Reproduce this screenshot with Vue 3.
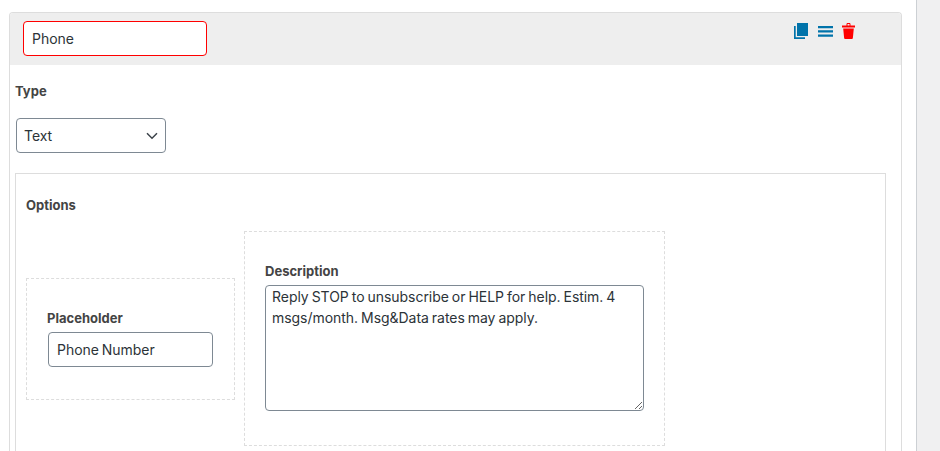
<script setup>
import { ref } from 'vue';

const fieldName = ref('Phone');
const fieldType = ref('Text');
const placeholder = ref('Phone Number');
const description = ref('Reply STOP to unsubscribe or HELP for help. Estim. 4 msgs/month. Msg&Data rates may apply.');
</script>

<template>
  <div class="page">
    <main class="content">
      <section class="field-card">
        <header class="field-head">
          <input v-model="fieldName" class="control name-input" type="text" />
          <div class="actions">
            <svg width="14" height="16" viewBox="0 0 14 16" class="icon">
              <path fill="#0073aa" d="M3 0h11v13H3z" />
              <path fill="#0073aa" d="M0 3h1.700v11.300H11V16H0z" />
            </svg>
            <svg width="15" height="11" viewBox="0 0 15 11" class="icon">
              <path fill="#0073aa" d="M0 0h15v2.300H0zM0 4.200h15v2.300H0zM0 8.500h15v2.300H0z" />
            </svg>
            <svg width="13" height="16" viewBox="0 0 13 16" class="icon trash">
              <path fill="#f00" d="M0 2.500h13v2H0zM4.500 2.500V1.200C4.500.5 5 0 5.700 0h1.600c.7 0 1.200.5 1.200 1.200v1.300h-1V1.100h-2v1.400zM1.200 5.500h10.600l-.9 9.200c-.1.700-.5 1.300-1.200 1.300H3.300c-.7 0-1.100-.6-1.200-1.300z" />
            </svg>
          </div>
        </header>
        <div class="field-body">
          <label class="label type-label">Type</label>
          <div class="select-wrap">
            <select v-model="fieldType" class="control type-select">
              <option>Text</option>
            </select>
            <svg class="chevron" width="12" height="8" viewBox="0 0 12 8">
              <path d="M1 1.200l5 5 5-5" fill="none" stroke="#3c434a" stroke-width="1.500" />
            </svg>
          </div>
          <div class="options">
            <div class="label options-label">Options</div>
            <div class="option-row">
              <div class="option-box placeholder-box">
                <label class="label">Placeholder</label>
                <input v-model="placeholder" class="control placeholder-input" type="text" />
              </div>
              <div class="option-box description-box">
                <label class="label">Description</label>
                <textarea v-model="description" class="control description-input"></textarea>
              </div>
            </div>
          </div>
        </div>
      </section>
    </main>
    <aside class="sidebar"></aside>
  </div>
</template>

<style>
html, body {
  margin: 0;
  height: 451px;
  overflow: hidden;
  background: #fff;
}
</style>

<style scoped>
.page {
  display: flex;
  height: 451px;
  overflow: hidden;
  font-family: Inter, "Noto Sans", sans-serif;
  font-size: 14px;
  color: #3c434a;
}
.content {
  width: 916px;
  flex: none;
  padding: 12px 14px 0 9px;
  box-sizing: border-box;
}
.sidebar {
  flex: 1;
  background: #f0f0f1;
  border-left: 1px solid #ccd0d4;
}
.field-card {
  border: 1px solid #ddd;
  border-bottom: 0;
  border-radius: 4px 4px 0 0;
  height: 500px;
  box-sizing: border-box;
  width: 893px;
}
.field-head {
  display: flex;
  justify-content: space-between;
  align-items: flex-start;
  height: 52px;
  background: #eee;
  padding: 8px 46px 0 13px;
  box-sizing: border-box;
  border-radius: 3px 3px 0 0;
}
.actions {
  display: flex;
  align-items: center;
  gap: 10px;
  margin-top: 2px;
}
.icon {
  display: block;
}
.trash {
  margin-left: -1px;
}
.control {
  font-family: inherit;
  font-size: 14px;
  word-spacing: -0.9px;
  letter-spacing: -0.04px;
  color: #2c3338;
  background: #fff;
  border: 1px solid #7e8993;
  border-radius: 4px;
  box-sizing: border-box;
  outline: 0;
  margin: 0;
}
.name-input {
  width: 184px;
  height: 35px;
  padding: 0 8px;
  border-color: #f00;
}
.field-body {
  padding: 0 0 0 5px;
}
.label {
  display: block;
  font-size: 13px;
  font-weight: 700;
  line-height: 18px;
  color: #444;
}
.type-label {
  margin-top: 17px;
}
.select-wrap {
  position: relative;
  width: 150px;
  margin: 18px 0 0 1px;
}
.type-select {
  display: block;
  width: 150px;
  height: 35px;
  padding: 0 24px 0 7px;
  appearance: none;
  -webkit-appearance: none;
}
.chevron {
  position: absolute;
  right: 8px;
  top: 14px;
}
.options {
  width: 871px;
  margin-top: 20px;
  padding: 0 10px;
  box-sizing: border-box;
  border: 1px solid #ddd;
  height: 400px;
}
.options-label {
  margin-top: 22px;
}
.option-row {
  display: flex;
  align-items: center;
  gap: 9px;
  margin-top: 17px;
}
.option-box {
  border: 1px dashed #ddd;
  box-sizing: border-box;
  padding: 20px;
}
.placeholder-box {
  width: 209px;
  height: 122px;
  padding-top: 30px;
}
.description-box {
  width: 421px;
  height: 215px;
  padding-top: 30px;
}
.placeholder-input {
  display: block;
  width: 165px;
  height: 35px;
  padding: 0 8px;
  margin: 5px 0 0 1px;
}
.description-input {
  display: block;
  width: 379px;
  height: 126px;
  padding: 0 6px;
  margin-top: 5px;
  line-height: 21px;
}
</style>
